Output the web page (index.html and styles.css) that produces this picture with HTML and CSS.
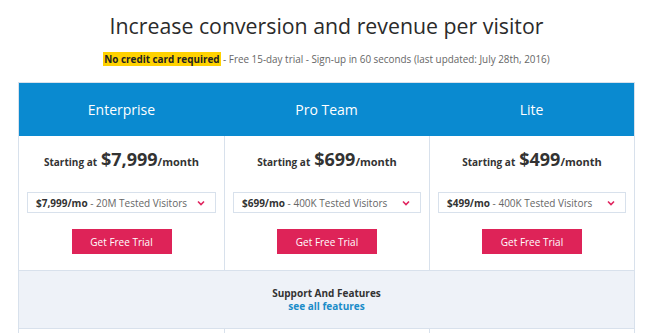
FILE: index.html
```html
<!DOCTYPE html>
<html>
<head>
<meta charset="utf-8">
<link rel="stylesheet" href="styles.css">
</head>
<body>
<div class="page">
  <h1 class="title">Increase conversion and revenue per visitor</h1>
  <p class="sub"><span class="hl">No credit card required</span> - Free 15-day trial - Sign-up in 60 seconds (last updated: July 28th, 2016)</p>
  <div class="table">
    <div class="head">
      <div class="hcell">Enterprise</div>
      <div class="hcell">Pro Team</div>
      <div class="hcell">Lite</div>
    </div>
    <div class="body">
      <div class="cell">
        <div class="price"><span class="st">Starting at</span> <span class="amt">$7,999</span><span class="per">/month</span></div>
        <div class="select"><span><b>$7,999/mo</b> - 20M Tested Visitors</span><svg class="chev" width="8" height="6" viewBox="0 0 8 6"><path d="M1 1.5 L4 4.5 L7 1.5" fill="none" stroke="#e0245e" stroke-width="1.6"/></svg></div>
        <a class="btn">Get Free Trial</a>
      </div>
      <div class="cell">
        <div class="price"><span class="st">Starting at</span> <span class="amt">$699</span><span class="per">/month</span></div>
        <div class="select"><span><b>$699/mo</b> - 400K Tested Visitors</span><svg class="chev" width="8" height="6" viewBox="0 0 8 6"><path d="M1 1.5 L4 4.5 L7 1.5" fill="none" stroke="#e0245e" stroke-width="1.6"/></svg></div>
        <a class="btn">Get Free Trial</a>
      </div>
      <div class="cell">
        <div class="price"><span class="st">Starting at</span> <span class="amt">$499</span><span class="per">/month</span></div>
        <div class="select"><span><b>$499/mo</b> - 400K Tested Visitors</span><svg class="chev" width="8" height="6" viewBox="0 0 8 6"><path d="M1 1.5 L4 4.5 L7 1.5" fill="none" stroke="#e0245e" stroke-width="1.6"/></svg></div>
        <a class="btn">Get Free Trial</a>
      </div>
    </div>
    <div class="features">
      <div class="ftitle">Support And Features</div>
      <a class="flink">see all features</a>
    </div>
    <div class="foot">
      <div class="fcell"></div>
      <div class="fcell"></div>
      <div class="fcell"></div>
    </div>
  </div>
</div>
</body>
</html>
```
FILE: styles.css
```css
* { box-sizing: border-box; }
html, body { margin: 0; padding: 0; background: #fff; }
body { font-family: "Open Sans", "Noto Sans", sans-serif; color: #333; overflow: hidden; }
.page { padding: 0 18px; }
.title {
  margin: 0;
  padding-top: 11px;
  height: 48px;
  font-size: 21.3px;
  font-weight: 400;
  text-align: center;
  color: #2b2b2b;
}
.sub {
  margin: 0;
  height: 34px;
  padding-top: 4px;
  font-size: 9.9px;
  color: #666;
  text-align: center;
}
.hl { background: #ffd200; color: #222; font-weight: 700; padding: 0 1px; }
.table { border-left: 1px solid #d8e1ec; border-right: 1px solid #d8e1ec; width: 617px; }
.head { display: grid; grid-template-columns: 1fr 1fr 1fr; background: #0a8ad0; height: 54px; border-top: 1px solid #d8e1ec; }
.hcell { display: flex; align-items: center; justify-content: center; color: #fff; font-size: 14px; }
.body { display: grid; grid-template-columns: 1fr 1fr 1fr; }
.cell {
  display: flex; flex-direction: column; align-items: center;
  padding: 11px 8px 16px;
  border-left: 1px solid #d8e1ec;
}
.cell:first-child { border-left: none; }
.price { height: 45px; display: flex; align-items: baseline; justify-content: center; font-weight: 700; color: #333; }
.st { font-size: 10px; margin-right: 4px; }
.amt { font-size: 18px; }
.per { font-size: 11px; }
.select {
  width: 100%; height: 21px;
  border: 1px solid #d8e1ec;
  display: flex; align-items: center; justify-content: space-between;
  padding: 0 10px 0 8px;
  font-size: 10px; color: #666;
}
.select b { color: #333; }
.chev { display: block; }
.btn {
  margin-top: 16px;
  width: 100px; height: 25px;
  background: #de2358;
  color: #fff; font-size: 10px;
  display: flex; align-items: center; justify-content: center;
}
.features {
  background: #eef2f8;
  border-top: 1px solid #d8e1ec;
  border-bottom: 1px solid #d8e1ec;
  height: 59px;
  display: flex; flex-direction: column; align-items: center; justify-content: center;
  font-weight: 700; font-size: 10px;
}
.ftitle { color: #333; line-height: 13px; }
.flink { color: #1a8cc8; line-height: 13px; }
.foot { display: grid; grid-template-columns: 1fr 1fr 1fr; height: 20px; }
.fcell { border-left: 1px solid #d8e1ec; }
.fcell:first-child { border-left: none; }
```
